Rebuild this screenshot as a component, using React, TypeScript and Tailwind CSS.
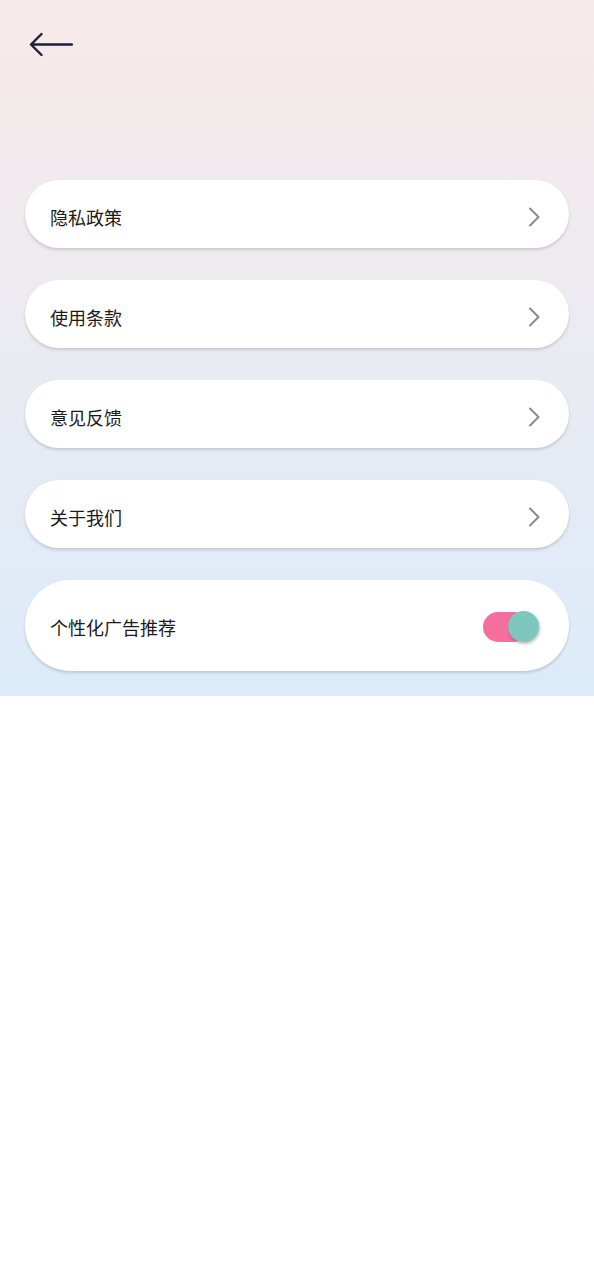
import React from "react";

const items = ["隐私政策", "使用条款", "意见反馈", "关于我们"];

function Chevron() {
  return (
    <svg width="14" height="22" viewBox="0 0 14 22" fill="none">
      <path d="M3 2.5 L11.5 11 L3 19.5" stroke="#8a8a8a" strokeWidth="2" strokeLinecap="round" strokeLinejoin="round" />
    </svg>
  );
}

export default function App() {
  return (
    <div className="w-[594px] min-h-[1280px] bg-white" style={{ fontFamily: '"Noto Sans CJK SC", "Noto Sans", sans-serif' }}>
      <div className="bg-gradient-to-b from-[#f8eaea] to-[#dcebf9] pb-[25px]">
        <div className="pt-[32px] pl-[29px] h-[180px]">
          <svg width="44" height="26" viewBox="0 0 44 26" fill="none">
            <path d="M43 12.5 H3 M12.5 2 L2 12.5 L12.5 23" stroke="#20203a" strokeWidth="2.4" strokeLinecap="round" strokeLinejoin="round" />
          </svg>
        </div>
        <div className="flex flex-col gap-[32px] px-[25px]">
          {items.map((t) => (
            <div key={t} className="h-[68px] rounded-full bg-white flex items-center justify-between pt-[6px] pl-[25px] pr-[28px] shadow-[0_2px_3px_rgba(0,0,0,0.15)]">
              <span className="text-[18px] text-[#1a1a1a] leading-none">{t}</span>
              <Chevron />
            </div>
          ))}
          <div className="h-[91px] rounded-full bg-white flex items-center justify-between pt-[3px] pl-[25px] pr-[30px] shadow-[0_2px_3px_rgba(0,0,0,0.15)]">
            <span className="text-[18px] text-[#1a1a1a] leading-none">个性化广告推荐</span>
            <div className="relative w-[56px] h-[32px] flex items-center">
              <div className="w-[46px] h-[30px] rounded-full bg-[#f56f9e]" />
              <div className="absolute left-[25px] top-[0px] w-[31px] h-[31px] rounded-full bg-[#7dc7bf] shadow-[1px_2px_3px_rgba(0,0,0,0.25)]" />
            </div>
          </div>
        </div>
      </div>
    </div>
  );
}
